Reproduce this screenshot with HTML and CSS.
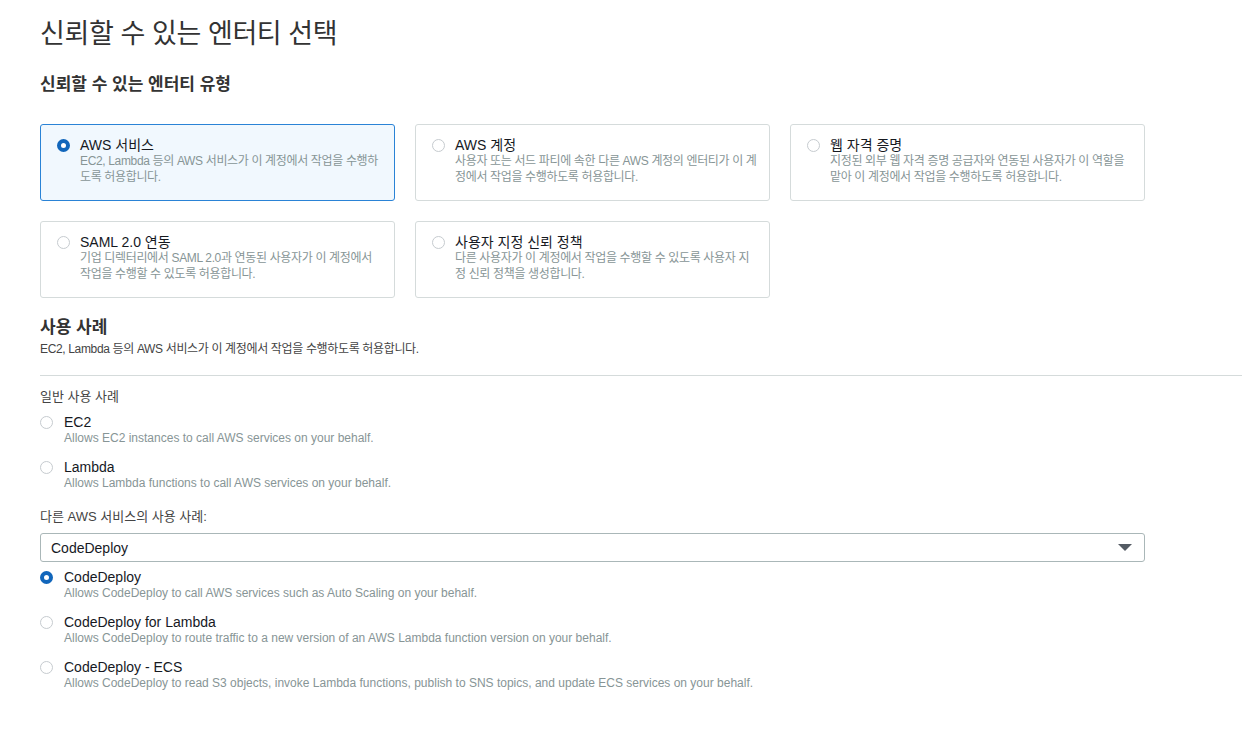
FILE: index.html
```html
<!DOCTYPE html>
<html lang="ko">
<head>
    <meta charset="UTF-8">
    <title>신뢰할 수 있는 엔터티 선택</title>
    <link rel="stylesheet" href="styles.css">
</head>
<body>

<div class="page">
    <h1 class="title">신뢰할 수 있는 엔터티 선택</h1>
    <h2 class="subtitle">신뢰할 수 있는 엔터티 유형</h2>

    <div class="cards">
        <div class="card selected">
            <span class="radio checked"></span>
            <div class="card-text">
                <div class="card-title">AWS 서비스</div>
                <div class="card-desc">EC2, Lambda 등의 AWS 서비스가 이 계정에서 작업을 수행하도록 허용합니다.</div>
            </div>
        </div>
        <div class="card">
            <span class="radio"></span>
            <div class="card-text">
                <div class="card-title">AWS 계정</div>
                <div class="card-desc">사용자 또는 서드 파티에 속한 다른 AWS 계정의 엔터티가 이 계정에서 작업을 수행하도록 허용합니다.</div>
            </div>
        </div>
        <div class="card">
            <span class="radio"></span>
            <div class="card-text">
                <div class="card-title">웹 자격 증명</div>
                <div class="card-desc">지정된 외부 웹 자격 증명 공급자와 연동된 사용자가 이 역할을 맡아 이 계정에서 작업을 수행하도록 허용합니다.</div>
            </div>
        </div>
        <div class="card">
            <span class="radio"></span>
            <div class="card-text">
                <div class="card-title">SAML 2.0 연동</div>
                <div class="card-desc">기업 디렉터리에서 SAML 2.0과 연동된 사용자가 이 계정에서 작업을 수행할 수 있도록 허용합니다.</div>
            </div>
        </div>
        <div class="card">
            <span class="radio"></span>
            <div class="card-text">
                <div class="card-title">사용자 지정 신뢰 정책</div>
                <div class="card-desc">다른 사용자가 이 계정에서 작업을 수행할 수 있도록 사용자 지정 신뢰 정책을 생성합니다.</div>
            </div>
        </div>
    </div>

    <h2 class="section-title">사용 사례</h2>
    <p class="section-desc">EC2, Lambda 등의 AWS 서비스가 이 계정에서 작업을 수행하도록 허용합니다.</p>
</div>

<hr class="divider">

<div class="page">
    <div class="group-label">일반 사용 사례</div>

    <div class="option first">
        <span class="radio"></span>
        <div>
            <div class="option-title">EC2</div>
            <div class="option-desc">Allows EC2 instances to call AWS services on your behalf.</div>
        </div>
    </div>
    <div class="option">
        <span class="radio"></span>
        <div>
            <div class="option-title">Lambda</div>
            <div class="option-desc">Allows Lambda functions to call AWS services on your behalf.</div>
        </div>
    </div>

    <div class="group-label other">다른 AWS 서비스의 사용 사례:</div>
    <div class="select">
        <span>CodeDeploy</span>
        <span class="caret"></span>
    </div>

    <div class="option first">
        <span class="radio checked"></span>
        <div>
            <div class="option-title">CodeDeploy</div>
            <div class="option-desc">Allows CodeDeploy to call AWS services such as Auto Scaling on your behalf.</div>
        </div>
    </div>
    <div class="option">
        <span class="radio"></span>
        <div>
            <div class="option-title">CodeDeploy for Lambda</div>
            <div class="option-desc">Allows CodeDeploy to route traffic to a new version of an AWS Lambda function version on your behalf.</div>
        </div>
    </div>
    <div class="option">
        <span class="radio"></span>
        <div>
            <div class="option-title">CodeDeploy - ECS</div>
            <div class="option-desc">Allows CodeDeploy to read S3 objects, invoke Lambda functions, publish to SNS topics, and update ECS services on your behalf.</div>
        </div>
    </div>
</div>

</body>
</html>
```

FILE: styles.css
```css
body {
    margin: 0;
    background-color: #fff;
    color: #16191f;
    font-family: "Liberation Sans", "Noto Sans CJK KR", sans-serif;
}
.page {
    padding: 0 97px 0 40px;
}
.page:first-child {
    padding-top: 16px;
}
.title {
    margin: 0;
    font-size: 27px;
    line-height: 36px;
    letter-spacing: -0.4px;
    font-weight: normal;
    color: #333;
}
.subtitle {
    margin: 23px 0 0;
    font-size: 17px;
    line-height: 20px;
    font-weight: bold;
    color: #333;
}
.cards {
    display: grid;
    grid-template-columns: repeat(3, 355px);
    column-gap: 20px;
    row-gap: 20px;
    margin-top: 29px;
}
.card {
    display: flex;
    align-items: flex-start;
    height: 77px;
    box-sizing: border-box;
    padding: 12px 12px 0 16px;
    border: 1px solid #d5dbdb;
    border-radius: 3px;
}
.card.selected {
    border-color: #2a83d6;
    background-color: #f1f8fe;
}
.card .radio {
    margin-top: 2px;
}
.card-text {
    margin-left: 10px;
}
.card-title {
    font-size: 14px;
    line-height: 16px;
    color: #16191f;
}
.card-desc {
    font-size: 12px;
    line-height: 16px;
    letter-spacing: -0.35px;
    color: #879596;
}
.radio {
    flex: none;
    width: 13px;
    height: 13px;
    box-sizing: border-box;
    border: 1px solid #c6cbcf;
    border-radius: 50%;
    background-color: #fff;
}
.radio.checked {
    border: 4px solid #1166bb;
}
.section-title {
    margin: 19px 0 0;
    font-size: 17px;
    line-height: 22px;
    font-weight: bold;
    color: #333;
}
.section-desc {
    margin: 2px 0 0;
    font-size: 12px;
    line-height: 16px;
    letter-spacing: -0.35px;
    color: #444;
}
.divider {
    margin: 18px 0 0 40px;
    border: none;
    border-top: 1px solid #d5dbdb;
}
.group-label {
    margin-top: 12px;
    font-size: 13px;
    line-height: 18px;
    color: #444;
}
.group-label.other {
    margin-top: 17px;
}
.option {
    display: flex;
    align-items: flex-start;
    margin-top: 13px;
}
.option.first {
    margin-top: 8px;
}
.select + .option.first {
    margin-top: 7px;
}
.option .radio {
    margin-top: 2px;
    margin-right: 11px;
}
.option-title {
    font-size: 14px;
    line-height: 16px;
    color: #16191f;
}
.option-desc {
    font-size: 12px;
    line-height: 16px;
    color: #879596;
}
.select {
    display: flex;
    justify-content: space-between;
    align-items: center;
    width: 1105px;
    height: 29px;
    box-sizing: border-box;
    margin-top: 7px;
    padding: 0 12px 0 10px;
    border: 1px solid #aab7b8;
    border-radius: 3px;
    font-size: 14px;
    color: #16191f;
}
.caret {
    width: 0;
    height: 0;
    border-left: 7px solid transparent;
    border-right: 7px solid transparent;
    border-top: 7px solid #545b64;
}
```
